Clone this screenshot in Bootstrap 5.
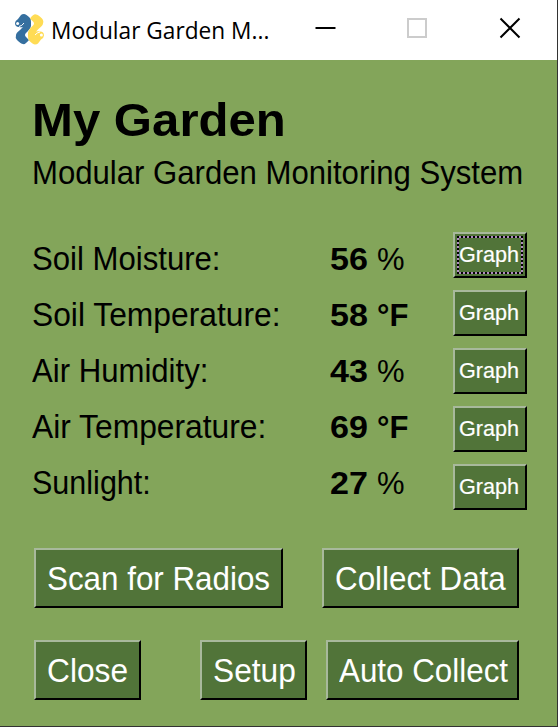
<!DOCTYPE html>
<html lang="en">
<head>
<meta charset="utf-8">
<meta name="viewport" content="width=device-width, initial-scale=1">
<title>Modular Garden Monitor</title>
<link href="https://cdn.jsdelivr.net/npm/bootstrap@5.3.0/dist/css/bootstrap.min.css" rel="stylesheet">
<style>
body{font-family:"Liberation Sans",Arial,sans-serif;color:#000;background:#83a55a}
.window{width:558px;height:727px;background:#83a55a;border-right:1px solid #333;border-bottom:1px solid #333;overflow:hidden}
.titlebar{height:60px;padding-left:14px}
.caption-text{font:24.4px/34px "Open Sans","Noto Sans",sans-serif;margin:0 0 0 5px;width:238px}
.stretch{display:inline-block;white-space:nowrap;transform-origin:0 50%}
.caption-text .stretch{transform:scaleX(.93)}
.content-area{padding:37px 30px 0 32px}
h1{font-size:47px;line-height:46px;font-weight:700;height:46px}
h1 .stretch{transform:scaleX(1.045)}
.subtitle{font-size:33px;line-height:40px;height:40px;margin-top:10px}
.thin{transform:scaleX(.943)}
.wide{transform:scaleX(.963)}
.narrow{transform:scaleX(.925)}
.readings{margin-top:38px}
.labels{width:297px;font-size:33px;line-height:56px}
.labels>div,.values>div{height:56px}
.values{width:124px;font-size:31px;line-height:56px;margin-top:1px}
.digits{width:48px;padding-left:1px;font-weight:700}
.digits .stretch{transform:scaleX(1.1)}
.win-btn{background:#517439;color:#fff;border:solid;border-width:2px;border-color:#a8b99c #000 #000 #a8b99c;border-radius:0;padding:0 0 0 11px;height:60px;font-size:33px;line-height:58px;text-align:left;white-space:nowrap;overflow:hidden}
.win-btn:hover{background:#517439;color:#fff;border-color:#a8b99c #000 #000 #a8b99c}
.graph-btn{width:74px;height:46px;padding-left:4px;font-size:22px;line-height:40px;position:relative;-webkit-text-stroke:.2px #fff}
.graph-btn .stretch{transform:scaleX(.98)}
.graph-list{gap:12px;margin-top:1px}
.focused::after{content:"";position:absolute;inset:2px;background:repeating-linear-gradient(90deg,#000 0 2px,#b08cc0 2px 4px) top/100% 2px no-repeat,repeating-linear-gradient(90deg,#000 0 2px,#b08cc0 2px 4px) bottom/100% 2px no-repeat,repeating-linear-gradient(#000 0 2px,#b08cc0 2px 4px) left/2px 100% no-repeat,repeating-linear-gradient(#000 0 2px,#b08cc0 2px 4px) right/2px 100% no-repeat}
.actions{margin:36px 8px 0 2px}
.actions .stretch{transform:scaleX(.95)}
.actions .short{transform:scaleX(.96)}
.actions-last{margin-top:32px}
.w-scan{width:249px}.w-collect{width:197px}.w-close{width:107px}.w-setup{width:107px}.w-auto{width:193px}
.gap-setup{margin-left:59px}.gap-auto{margin-left:19px}
</style>
</head>
<body>
<main class="window">
<header class="titlebar bg-white d-flex align-items-center">
<svg width="32" height="32" viewBox="0 0 32 32" class="flex-shrink-0">
<path d="M10 0Q12 0 16 4Q17 5 17 8V12Q17 14 14 17L12 19Q10 21 12 23L15 26Q11 31 9 30Q7 30 3 26Q1 24 2 21Q2 19 6 16L9 13Q7 13.500 5 13Q1 13 1 9Q1 7 4 5L7 1Q8 0 10 0Z" fill="#356f9f"/>
<path d="M10 0Q12 0 16 4Q17 5 17 8V12Q17 14 14 17L12 19Q10 21 12 23L15 26Q11 31 9 30Q7 30 3 26Q1 24 2 21Q2 19 6 16L9 13Q7 13.500 5 13Q1 13 1 9Q1 7 4 5L7 1Q8 0 10 0Z" transform="rotate(180 15.500 15.200)" fill="#ffdc55"/>
<g fill="none" stroke="#fff"><path d="M5 12.500Q8 12 10 9M26 18Q23 18.500 21 21"/></g>
<circle cx="3.600" cy="9.500" r="1.500" fill="#fff"/><circle cx="27.400" cy="21" r="1.500" fill="#fff"/>
</svg>
<div class="caption-text"><span class="stretch">Modular Garden M...</span></div>
<svg width="250" height="60" viewBox="0 0 250 60" class="ms-auto flex-shrink-0" fill="none" stroke="#000" stroke-width="2"><path d="M8.500 28H28.500"/><rect x="101" y="19" width="18" height="18" stroke="#ccc"/><path d="M193.500 18.500 212.500 37.500M212.500 18.500 193.500 37.500"/></svg>
</header>
<section class="content-area">
<h1 class="mb-0"><span class="stretch">My Garden</span></h1>
<div class="subtitle"><span class="stretch thin">Modular Garden Monitoring System</span></div>
<div class="readings d-flex align-items-start">
<div class="labels flex-shrink-0">
<div><span class="stretch thin">Soil Moisture:</span></div><div><span class="stretch wide">Soil Temperature:</span></div><div><span class="stretch thin">Air Humidity:</span></div><div><span class="stretch wide">Air Temperature:</span></div><div><span class="stretch narrow">Sunlight:</span></div>
</div>
<div class="values flex-shrink-0">
<div class="d-flex"><span class="digits"><span class="stretch">56</span></span><span>%</span></div>
<div class="d-flex"><span class="digits"><span class="stretch">58</span></span><b>°F</b></div>
<div class="d-flex"><span class="digits"><span class="stretch">43</span></span><span>%</span></div>
<div class="d-flex"><span class="digits"><span class="stretch">69</span></span><b>°F</b></div>
<div class="d-flex"><span class="digits"><span class="stretch">27</span></span><span>%</span></div>
</div>
<div class="graph-list d-flex flex-column">
<button class="btn win-btn graph-btn focused"><span class="stretch">Graph</span></button>
<button class="btn win-btn graph-btn"><span class="stretch">Graph</span></button>
<button class="btn win-btn graph-btn"><span class="stretch">Graph</span></button>
<button class="btn win-btn graph-btn"><span class="stretch">Graph</span></button>
<button class="btn win-btn graph-btn"><span class="stretch">Graph</span></button>
</div>
</div>
<div class="actions d-flex justify-content-between">
<button class="btn win-btn w-scan"><span class="stretch">Scan for Radios</span></button>
<button class="btn win-btn w-collect"><span class="stretch">Collect Data</span></button>
</div>
<div class="actions actions-last d-flex">
<button class="btn win-btn w-close"><span class="stretch short">Close</span></button>
<button class="btn win-btn w-setup gap-setup"><span class="stretch short">Setup</span></button>
<button class="btn win-btn w-auto gap-auto"><span class="stretch">Auto Collect</span></button>
</div>
</section>
</main>
<script src="https://cdn.jsdelivr.net/npm/bootstrap@5.3.0/dist/js/bootstrap.bundle.min.js"></script>
</body>
</html>
